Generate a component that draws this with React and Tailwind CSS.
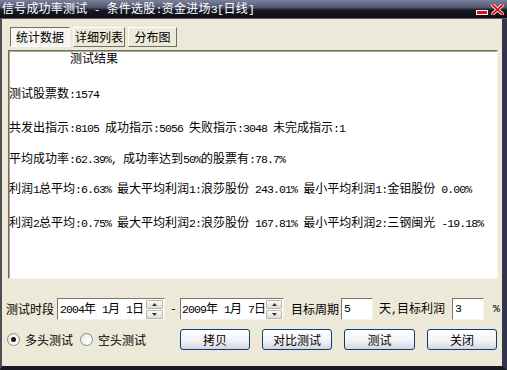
import React from "react";

const ASCII = /([\x20-\x7e]+)/;
const MONO = "font-['Liberation_Mono',monospace] text-[11.5px] tracking-[-0.9px]";

// SimSun-ish look: CJK at 12px, latin runs at 6px per char
const Mix = ({ text, cls = MONO }) =>
  text.split(ASCII).map((p, i) =>
    i % 2 ? (
      <span key={i} className={cls}>
        {p}
      </span>
    ) : (
      p
    )
  );

const lines = [
  { text: "测试结果", mt: "mt-0", pl: "pl-[61px]" },
  { text: "测试股票数:1574", mt: "mt-[21px]", pl: "pl-0" },
  { text: "共发出指示:8105 成功指示:5056 失败指示:3048 未完成指示:1", mt: "mt-[20px]", pl: "pl-0" },
  { text: "平均成功率:62.39%, 成功率达到50%的股票有:78.7%", mt: "mt-[17px]", pl: "pl-0" },
  {
    text: "利润1总平均:6.63% 最大平均利润1:浪莎股份 243.01% 最小平均利润1:金钼股份 0.00%",
    mt: "mt-[16px]",
    pl: "pl-0",
  },
  {
    text: "利润2总平均:0.75% 最大平均利润2:浪莎股份 167.81% 最小平均利润2:三钢闽光 -19.18%",
    mt: "mt-[20px]",
    pl: "pl-0",
  },
];

const Tab = ({ label, active, w }) => (
  <div
    className={`${w} h-[20px] flex items-center justify-center border leading-none ${
      active
        ? "border-t-[#716f64] border-l-[#716f64] border-b-white border-r-white bg-[#f6f5ef]"
        : "border-t-white border-l-white border-b-[#716f64] border-r-[#716f64] bg-[#ece9d8]"
    }`}
  >
    {label}
  </div>
);

const Field = ({ w, children }) => (
  <div
    className={`${w} h-[22px] flex items-center bg-white border border-t-[#7a7868] border-l-[#7a7868] border-b-[#f4f3ee] border-r-[#f4f3ee] whitespace-pre`}
  >
    {children}
  </div>
);

const Spin = () => (
  <div className="ml-auto w-[17px] h-[19px] flex flex-col gap-px mr-px">
    {["up", "down"].map((d) => (
      <div
        key={d}
        className="flex-1 flex items-center justify-center bg-[linear-gradient(to_bottom,#fbfbf9,#dcdad0)] border border-[#b8b6a8] rounded-[1px]"
      >
        <svg width="5" height="3" viewBox="0 0 5 3">
          {d === "up" ? (
            <path d="M2.5 0 L5 3 L0 3 Z" fill="#333" />
          ) : (
            <path d="M0 0 L5 0 L2.5 3 Z" fill="#333" />
          )}
        </svg>
      </div>
    ))}
  </div>
);

const Radio = ({ checked, label }) => (
  <div className="flex items-center">
    <div className="w-[13px] h-[13px] rounded-full border border-[#7f8c99] bg-[radial-gradient(circle_at_70%_70%,#ffffff,#e4e3dc)] flex items-center justify-center">
      {checked && <div className="w-[5px] h-[5px] rounded-full bg-[#1a1a1a]" />}
    </div>
    <span className="ml-[5px]">{label}</span>
  </div>
);

const Btn = ({ label, w, ml }) => (
  <div
    className={`${w} ${ml} h-[21px] flex items-center justify-center rounded-[3px] border border-[#0f3c74] bg-[linear-gradient(to_bottom,#ffffff,#f3f3f6_55%,#d5d4e2)] leading-none`}
  >
    {label}
  </div>
);

export default function App() {
  return (
    <div className="w-[507px] h-[370px] flex flex-col overflow-hidden font-['Noto_Sans_CJK_SC','Liberation_Sans',sans-serif] text-[12px] text-black bg-[#ece9d8]">
      {/* title bar */}
      <div className="h-[19px] shrink-0 flex items-center pl-[2px] bg-[linear-gradient(to_bottom,#7b7f9c_0%,#555a74_40%,#1a1a26_56%,#0b0b12_100%)] border-b border-[#5c5e6a]">
        <span className="text-white text-[12px] tracking-[0.2px] leading-none whitespace-pre">
          <Mix text="信号成功率测试 - 条件选股:资金进场3[日线]" cls="font-['Liberation_Mono',monospace] text-[11.5px] tracking-[-0.5px]" />
        </span>
        <div className="ml-auto flex items-end h-full pb-[3px] pr-[3px]">
          <svg width="12" height="5" viewBox="0 0 12 5">
            <rect x="0.5" y="0.5" width="11" height="4" fill="#e01010" stroke="#ffffff" strokeWidth="1" />
          </svg>
          <svg width="13" height="11" viewBox="0 0 13 11" className="ml-[3px]">
            <path d="M1.5 1 L11.5 10 M11.5 1 L1.5 10" stroke="#ffffff" strokeWidth="3.6" strokeLinecap="square" />
            <path d="M1.5 1 L11.5 10 M11.5 1 L1.5 10" stroke="#e01010" strokeWidth="2" strokeLinecap="square" />
          </svg>
        </div>
      </div>

      {/* body */}
      <div className="flex-1 flex flex-col border-l-2 border-l-[#4e4e54] border-r-[5px] border-r-[#33354a] border-b-[4px] border-b-[#1a1a22]">
        <div className="flex gap-[3px] mt-[8px] ml-[8px]">
          <Tab label="统计数据" active w="w-[60px]" />
          <Tab label="详细列表" w="w-[52px]" />
          <Tab label="分布图" w="w-[49px]" />
        </div>

        <div className="mt-[3px] ml-[6px] mr-[4px] h-[229px] bg-white border border-t-[#716f64] border-l-[#716f64] border-b-[#f4f3ee] border-r-[#f4f3ee] shadow-[inset_1px_1px_0_#a9a799] whitespace-pre">
          {lines.map((l) => (
            <div key={l.text} className={`${l.mt} ${l.pl} leading-[14px] h-[14px]`}>
              <Mix text={l.text} />
            </div>
          ))}
        </div>

        <div className="mt-[19px] flex items-center h-[22px] whitespace-pre">
          <span className="ml-[4px]">测试时段</span>
          <div className="ml-[3px]">
            <Field w="w-[108px]">
              <span className="ml-[2px]">
                <Mix text="2004年 1月 1日" />
              </span>
              <Spin />
            </Field>
          </div>
          <span className={`${MONO} ml-[5px]`}>-</span>
          <div className="ml-[4px]">
            <Field w="w-[104px]">
              <span className="ml-[1px]">
                <Mix text="2009年 1月 7日" />
              </span>
              <Spin />
            </Field>
          </div>
          <span className="ml-[7px]">目标周期</span>
          <div className="ml-[2px]">
            <Field w="w-[32px]">
              <span className={`${MONO} ml-[2px]`}>5</span>
            </Field>
          </div>
          <span className="ml-[6px]">
            <Mix text="天,目标利润" />
          </span>
          <div className="ml-[7px]">
            <Field w="w-[32px]">
              <span className={`${MONO} ml-[2px]`}>3</span>
            </Field>
          </div>
          <span className={`${MONO} ml-[9px]`}>%</span>
        </div>

        <div className="mt-[9px] flex items-center h-[21px]">
          <div className="ml-[5px]">
            <Radio checked label="多头测试" />
          </div>
          <div className="ml-[7px]">
            <Radio label="空头测试" />
          </div>
          <Btn label="拷贝" w="w-[70px]" ml="ml-[34px]" />
          <Btn label="对比测试" w="w-[70px]" ml="ml-[12px]" />
          <Btn label="测试" w="w-[71px]" ml="ml-[12px]" />
          <Btn label="关闭" w="w-[70px]" ml="ml-[12px]" />
        </div>
      </div>
    </div>
  );
}
